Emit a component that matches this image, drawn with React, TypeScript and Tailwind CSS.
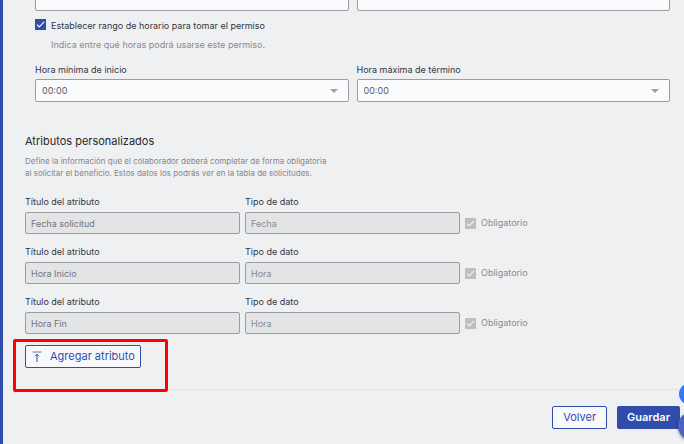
import React, { useId, useState } from 'react';

const HOURS = ['00:00', '06:00', '08:00', '12:00', '18:00', '23:00'];

const customAttributes = [
  { title: 'Fecha solicitud', type: 'Fecha' },
  { title: 'Hora Inicio', type: 'Hora' },
  { title: 'Hora Fin', type: 'Hora' },
];

const CheckMark: React.FC = () => (
  <svg viewBox="0 0 11 11" className="pointer-events-none col-start-1 row-start-1 h-[11px] w-[11px]" fill="none" aria-hidden="true">
    <path d="M2 5.6 4.2 7.9 9.2 2.9" stroke="#f4f6fb" strokeWidth="1.2" />
  </svg>
);

const HourSelect: React.FC<{ label: string }> = ({ label }) => {
  const id = useId();
  const [value, setValue] = useState('00:00');

  return (
    <div className="flex flex-col gap-[2px]">
      <label htmlFor={id} className="text-[9px] leading-[14px] text-[#35363f]">{label}</label>
      <div className="grid items-center">
        <select
          id={id}
          value={value}
          onChange={e => setValue(e.target.value)}
          className="col-start-1 row-start-1 h-[23px] w-full appearance-none rounded-[2px] border border-[#9b9ca0] bg-[#fafbfd] px-[6px] text-[9px] text-[#5c5d63]"
        >
          {HOURS.map(h => <option key={h} value={h}>{h}</option>)}
        </select>
        <svg viewBox="0 0 8 4" className="pointer-events-none col-start-1 row-start-1 mr-[11px] h-1 w-2 justify-self-end" aria-hidden="true">
          <path d="M0 0h8L4 4z" fill="#9fa0a3" />
        </svg>
      </div>
    </div>
  );
};

const LockedField: React.FC<{ label: string; value: string; dim?: boolean }> = ({ label, value, dim }) => {
  const id = useId();

  return (
    <div className="flex flex-col gap-[3px]">
      <label htmlFor={id} className="text-[9px] leading-[14px] text-[#35363f]">{label}</label>
      <input
        id={id}
        type="text"
        value={value}
        disabled
        className={`h-[22px] w-full rounded-[2px] border border-[#9b9ca0] bg-[#e3e4e6] px-[5px] text-[9px] ${dim ? 'text-[#8a8b8f]' : 'text-[#75767b]'}`}
      />
    </div>
  );
};

const App: React.FC = () => {
  const [hasRange, setHasRange] = useState(true);

  return (
    <div className="relative min-h-screen overflow-hidden border-l-[3px] border-[#304dab] bg-[#eff0f2] pr-1 pb-[15px] pl-[22px] font-['Inter',sans-serif]">
      <section className="px-[10px]">
        <div className="-mt-3 grid grid-cols-2 gap-2">
          <input type="text" aria-label="Desde" className="h-[23px] w-full rounded-[2px] border border-[#9b9ca0] bg-[#fafbfd]" />
          <input type="text" aria-label="Hasta" className="h-[23px] w-full rounded-[2px] border border-[#9b9ca0] bg-[#fafbfd]" />
        </div>

        <label className="mt-2 flex items-start gap-[5px] text-[9px] leading-[14px] text-[#35363f]">
          <span className="grid">
            <input
              type="checkbox"
              checked={hasRange}
              onChange={e => setHasRange(e.target.checked)}
              className="col-start-1 row-start-1 h-[11px] w-[11px] appearance-none bg-[#304dab]"
            />
            {hasRange && <CheckMark />}
          </span>
          Establecer rango de horario para tomar el permiso
        </label>
        <p className="mt-[5px] pl-4 text-[9px] leading-[14px] text-[#8a8b8f]">Indica entre qué horas podrá usarse este permiso.</p>

        <div className="mt-[11px] grid grid-cols-2 gap-2">
          <HourSelect label="Hora mínima de inicio" />
          <HourSelect label="Hora máxima de término" />
        </div>
      </section>

      <section className="mt-[31px]">
        <h2 className="text-[11px] leading-4 text-[#26272e]">Atributos personalizados</h2>
        <p className="mt-[6px] text-[8px] leading-3 text-[#85868b]">
          Define la información que el colaborador deberá completar de forma obligatoria
          <br />
          al solicitar el beneficio. Estos datos los podrás ver en la tabla de solicitudes.
        </p>

        <div className="mt-4 flex flex-col gap-[11px]">
          {customAttributes.map((attr, i) => (
            <div key={i} className="grid grid-cols-3 items-end gap-[5px]">
              <LockedField label="Título del atributo" value={attr.title} />
              <LockedField label="Tipo de dato" value={attr.type} dim />
              <label className="flex h-[22px] items-center gap-[5px] text-[9px] text-[#8a8b8f]">
                <span className="grid">
                  <input type="checkbox" checked disabled readOnly className="col-start-1 row-start-1 h-[11px] w-[11px] appearance-none rounded-[1px] bg-[#bdbec0]" />
                  <CheckMark />
                </span>
                Obligatorio
              </label>
            </div>
          ))}
        </div>

        <div className="relative mt-[11px] w-fit">
          <button type="button" className="flex h-[23px] items-center gap-2 rounded-[2px] border border-[#304dab] bg-[#f8f9fc] pr-[5px] pl-[6px] text-[11px] leading-4 text-[#304dab]">
            <svg viewBox="0 0 10 11" className="h-[11px] w-[10px]" fill="none" stroke="#304dab" aria-hidden="true">
              <path d="M.5 1h9" strokeOpacity=".8" />
              <path d="M5 3.2V11M3 5.2l2-2 2 2" />
            </svg>
            <span className="pb-[2px]">Agregar atributo</span>
          </button>
          <div className="pointer-events-none absolute -top-[6px] -right-[27px] -bottom-[24px] -left-3 z-10 rounded-[2px] border-[3px] border-[#ff0000]" />
        </div>
      </section>

      <footer className="mt-[21px] flex justify-end gap-[10px] border-t border-[#e2e3e6] pt-4">
        <button type="button" className="h-[23px] rounded-[2px] border border-[#304dab] bg-[#f8f9fc] px-[10px] pb-[2px] text-[11px] leading-4 text-[#304dab]">Volver</button>
        <button type="button" className="h-[23px] rounded-[2px] bg-[#304dab] px-[10px] pb-[2px] text-[11px] leading-4 font-semibold text-white">Guardar</button>
      </footer>

      <button type="button" aria-label="Ayuda" className="absolute -right-[17px] bottom-[39px] h-[22px] w-[22px] rounded-full bg-[#2f7bff]" />
      <button type="button" aria-label="Chat" className="absolute -right-[22px] bottom-1 h-7 w-7 rounded-full bg-[#4c64c0] shadow-[0_1px_3px_rgba(0,0,0,0.5)]" />
    </div>
  );
};

export default App;
